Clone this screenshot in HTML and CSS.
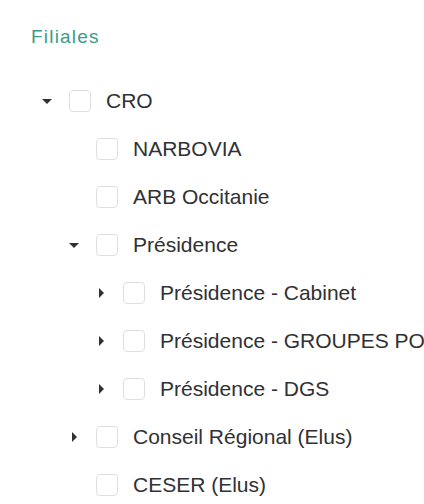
FILE: index.html
```html
<!DOCTYPE html>
<html lang="fr">
<head>
<meta charset="utf-8">
<link rel="stylesheet" href="styles.css">
</head>
<body>
<div class="panel">
  <div class="title">Filiales</div>
  <ul class="tree">
    <li class="row lvl0"><span class="arrow down"></span><span class="cb"></span><span class="label">CRO</span></li>
    <li class="row lvl1"><span class="arrow"></span><span class="cb"></span><span class="label">NARBOVIA</span></li>
    <li class="row lvl1"><span class="arrow"></span><span class="cb"></span><span class="label">ARB Occitanie</span></li>
    <li class="row lvl1"><span class="arrow down"></span><span class="cb"></span><span class="label">Présidence</span></li>
    <li class="row lvl2"><span class="arrow right"></span><span class="cb"></span><span class="label">Présidence - Cabinet</span></li>
    <li class="row lvl2"><span class="arrow right"></span><span class="cb"></span><span class="label">Présidence - GROUPES POLITIQUES</span></li>
    <li class="row lvl2"><span class="arrow right"></span><span class="cb"></span><span class="label">Présidence - DGS</span></li>
    <li class="row lvl1"><span class="arrow right"></span><span class="cb"></span><span class="label">Conseil Régional (Elus)</span></li>
    <li class="row lvl1"><span class="arrow"></span><span class="cb"></span><span class="label">CESER (Elus)</span></li>
  </ul>
</div>
</body>
</html>
```
FILE: styles.css
```css
html, body {
  margin: 0;
  padding: 0;
  background: #ffffff;
  overflow: hidden;
}
.panel {
  padding-top: 25px;
  font-family: "Liberation Sans", Arial, sans-serif;
}
.title {
  padding-left: 31px;
  font-size: 19px;
  line-height: 24px;
  letter-spacing: 1.2px;
  color: #3a9c89;
}
.tree {
  list-style: none;
  margin: 27.5px 0 0 0;
  padding: 0;
}
.row {
  display: flex;
  align-items: center;
  height: 48px;
  white-space: nowrap;
  overflow: hidden;
}
.lvl0 { padding-left: 36px; }
.lvl1 { padding-left: 63px; }
.lvl2 { padding-left: 90px; }
.arrow {
  flex: none;
  width: 22px;
  height: 10px;
  margin-right: 11px;
  position: relative;
}
.arrow.down::before {
  content: "";
  position: absolute;
  left: 6px;
  top: 3px;
  border-left: 5px solid transparent;
  border-right: 5px solid transparent;
  border-top: 5px solid #303133;
}
.arrow.right::before {
  content: "";
  position: absolute;
  left: 9px;
  top: 0px;
  border-top: 5px solid transparent;
  border-bottom: 5px solid transparent;
  border-left: 5px solid #303133;
}
.cb {
  flex: none;
  width: 22px;
  height: 22px;
  box-sizing: border-box;
  border: 1px solid #dcdfe6;
  border-radius: 4px;
  background: #fff;
  margin-right: 15px;
}
.label {
  font-size: 21px;
  color: #303133;
  line-height: 24px;
}
```
